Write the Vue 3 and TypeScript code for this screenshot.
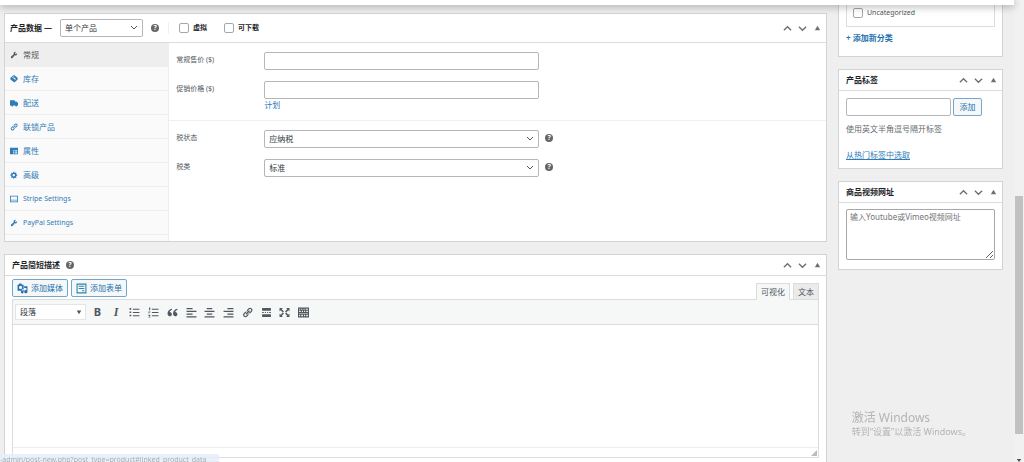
<script setup lang="ts">
import { ref } from 'vue'

interface Tab {
  id: string
  label: string
  icon: string
  latin?: boolean
}

const tabs: Tab[] = [
  { id: 'general', label: '常规', icon: 'wrench' },
  { id: 'inventory', label: '库存', icon: 'tag' },
  { id: 'shipping', label: '配送', icon: 'truck' },
  { id: 'linked', label: '联锁产品', icon: 'link' },
  { id: 'attributes', label: '属性', icon: 'table' },
  { id: 'advanced', label: '高级', icon: 'gear' },
  { id: 'stripe', label: 'Stripe Settings', icon: 'card', latin: true },
  { id: 'paypal', label: 'PayPal Settings', icon: 'wrench', latin: true },
]

const paths: Record<string, string> = {
  wrench:
    'M16.68 9.77c-1.34 1.34-3.3 1.67-4.95.99l-5.41 6.52c-.99.99-2.59.99-3.58 0s-.99-2.59 0-3.57l6.52-5.42c-.68-1.65-.35-3.61.99-4.95 1.28-1.28 3.12-1.62 4.72-1.06l-2.89 2.89 2.82 2.82 2.86-2.87c.53 1.58.18 3.39-1.08 4.65z',
  tag: 'M10 0l9 7v4l-8 8-10-8V7zM10 3L5 7l1 1 5-4zM8 8l5 4 2-2-5-4z',
  truck: 'M0 3h12v3h4l4 4v6h-2a2.500 2.500 0 0 1-5 0H8a2.500 2.500 0 0 1-5 0H0z',
  link: 'M17.74 2.76c1.68 1.69 1.68 4.41 0 6.1l-1.53 1.52c-1.12 1.12-2.7 1.47-4.14 1.09l2.62-2.61.76-.77.76-.76c.84-.84.84-2.2 0-3.04-.84-.85-2.2-.85-3.04 0l-.77.76-3.38 3.38c-.37-1.44-.02-3.02 1.1-4.14l1.52-1.53c1.69-1.68 4.42-1.68 6.1 0zM8.59 13.43l5.34-5.34c.42-.42.42-1.1 0-1.52-.44-.43-1.13-.39-1.53 0l-5.33 5.34c-.42.42-.42 1.1 0 1.52.44.43 1.13.39 1.52 0zm-.76 2.29l4.14-4.15c.38 1.44.03 3.02-1.09 4.14l-1.52 1.53c-1.69 1.68-4.41 1.68-6.1 0-1.68-1.68-1.68-4.42 0-6.1l1.53-1.52c1.12-1.12 2.7-1.47 4.14-1.1l-4.14 4.15c-.85.84-.85 2.2 0 3.05.84.84 2.2.84 3.04 0z',
  table: 'M0 2h20v16H0zM8 8v3h3V8zM13 8v3h5V8zM8 13v3h3v-3zM13 13v3h5v-3z',
  gear: 'M18 12h-2.18c-.17.7-.44 1.35-.81 1.93l1.54 1.54-2.1 2.1-1.54-1.54c-.58.36-1.23.63-1.91.79V19H8v-2.18c-.68-.16-1.33-.43-1.91-.79l-1.54 1.54-2.12-2.12 1.54-1.54c-.36-.58-.63-1.23-.79-1.91H1V9.03h2.17c.16-.7.44-1.35.8-1.94L2.43 5.55l2.1-2.1 1.54 1.54c.58-.37 1.24-.64 1.93-.81V2h3v2.18c.68.16 1.33.43 1.91.79l1.54-1.54 2.12 2.12-1.54 1.54c.36.59.64 1.24.8 1.94H18V12zm-8.5 1.5c1.66 0 3-1.34 3-3s-1.34-3-3-3-3 1.34-3 3 1.34 3 3 3z',
  card: 'M0 2h20v16H0zM2 4v12h16V4zM3 12h4v2H3zM8 12h4v2H8zM13 12h4v2h-4z',
  ul: 'M7 3h12v2H7zM7 9h12v2H7zM7 15h12v2H7zM1 2h3v3H1zM1 8h3v3H1zM1 14h3v3H1z',
  ol: 'M7 3h12v2H7zM7 9h12v2H7zM7 15h12v2H7zM2 1h2v5H2zM1 8h3v2H2v2H1zM1 14h3v5H1v-1h2v-1H1z',
  quote:
    'M9 3C4 4 1 7 1 12c0 3 2 5 4 5s4-2 4-4-2-4-4-4c0-2 2-3 4-4zM19 3c-5 1-8 4-8 9 0 3 2 5 4 5s4-2 4-4-2-4-4-4c0-2 2-3 4-4z',
  left: 'M1 2h11v2H1zM1 7h18v2H1zM1 12h11v2H1zM1 17h18v2H1z',
  center: 'M5 2h10v2H5zM1 7h18v2H1zM5 12h10v2H5zM1 17h18v2H1z',
  right: 'M8 2h11v2H8zM1 7h18v2H1zM8 12h11v2H8zM1 17h18v2H1z',
  more: 'M2 2h16v5H2zM2 9h3v2H2zM7 9h2v2H7zM11 9h2v2h-2zM15 9h3v2h-3zM2 13h16v5H2z',
  full: 'M1 2h6L5 4l4 4-2 2-4-4-2 2zM19 2v6l-2-2-4 4-2-2 4-4-2-2zM1 18v-6l2 2 4-4 2 2-4 4 2 2zM19 18h-6l2-2-4-4 2-2 4 4 2-2z',
  keyboard:
    'M0 1h20v18H0zM2 3v2h2V3zM6 3v2h2V3zM10 3v2h2V3zM14 3v2h4V3zM2 7v2h3V7zM7 7v2h2V7zM11 7v2h2V7zM15 7v2h3V7zM2 11v1h16v-1zM2 14v3h2v-3zM6 14v3h3v-3zM11 14v3h2v-3zM15 14v3h3v-3z',
  media:
    'M1 3h2l1-2h4l1 2h3v8H9v3H1zM6.500 5a3 3 0 1 0 0 6a3 3 0 1 0 0-6zM13 6h6v10a3 3 0 1 1-2-3V9h-4zM12 12v5a2.500 2.500 0 1 1-2-3v-2z',
  form: 'M1 1h18v18H1zM3 3v14h14V3zM5 5h10v2H5zM5 9h10v2H5zM11 13h4v2h-4z',
}

const tools = [
  { id: 'ul', label: '项目符号列表' },
  { id: 'ol', label: '编号列表' },
  { id: 'quote', label: '段落引用' },
  { id: 'left', label: '左对齐' },
  { id: 'center', label: '居中对齐' },
  { id: 'right', label: '右对齐' },
  { id: 'link', label: '插入链接' },
  { id: 'more', label: '插入More标签' },
  { id: 'full', label: '全屏' },
  { id: 'keyboard', label: '工具栏开关' },
]

const activeTab = ref('general')
const regularPrice = ref('')
const salePrice = ref('')
const tag = ref('')
const video = ref('')
const content = ref('')
</script>

<template>
  <div class="screen">
    <div class="page">
      <header class="topbar"></header>
      <div class="columns">
        <main class="main">
          <section class="panel data">
            <div class="head head-tall">
              <h2>产品数据 —</h2>
              <span class="select type">
                <select aria-label="产品类型"><option>单个产品</option></select>
                <svg viewBox="0 0 8 8"><path d="M1 2l3 3 3-3" /></svg>
              </span>
              <span class="help">?</span>
              <div class="flags">
                <label><input type="checkbox" />虚拟</label>
                <label><input type="checkbox" />可下载</label>
              </div>
              <div class="handles">
                <button aria-label="上移"><svg viewBox="0 0 10 10"><path d="M1 7l4-4 4 4" /></svg></button>
                <button aria-label="下移"><svg viewBox="0 0 10 10"><path d="M1 3l4 4 4-4" /></svg></button>
                <button aria-label="切换面板"><svg viewBox="0 0 10 10"><path class="solid" d="M5 2l3 5H2z" /></svg></button>
              </div>
            </div>
            <div class="data-body">
              <nav class="tabs">
                <a
                  v-for="t in tabs"
                  :key="t.id"
                  :href="'#' + t.id"
                  :class="{ active: t.id === activeTab, latin: t.latin }"
                  @click.prevent="activeTab = t.id"
                >
                  <svg class="icon" viewBox="0 0 20 20"><path :d="paths[t.icon]" /></svg>
                  <span>{{ t.label }}</span>
                </a>
              </nav>
              <div class="fields">
                <div class="group">
                  <div class="field">
                    <label for="regular">常规售价 ($)</label>
                    <input id="regular" v-model="regularPrice" class="box" type="text" />
                  </div>
                  <div class="field">
                    <label for="sale">促销价格 ($)</label>
                    <input id="sale" v-model="salePrice" class="box" type="text" />
                  </div>
                  <a class="schedule" href="#schedule">计划</a>
                </div>
                <div class="group">
                  <div class="field">
                    <label for="tax-status">税状态</label>
                    <span class="select box">
                      <select id="tax-status"><option>应纳税</option></select>
                      <svg viewBox="0 0 8 8"><path d="M1 2l3 3 3-3" /></svg>
                    </span>
                    <span class="help">?</span>
                  </div>
                  <div class="field">
                    <label for="tax-class">税类</label>
                    <span class="select box">
                      <select id="tax-class"><option>标准</option></select>
                      <svg viewBox="0 0 8 8"><path d="M1 2l3 3 3-3" /></svg>
                    </span>
                    <span class="help">?</span>
                  </div>
                </div>
              </div>
            </div>
          </section>

          <section class="panel description">
            <div class="head">
              <h2>产品简短描述</h2>
              <span class="help">?</span>
              <div class="handles">
                <button aria-label="上移"><svg viewBox="0 0 10 10"><path d="M1 7l4-4 4 4" /></svg></button>
                <button aria-label="下移"><svg viewBox="0 0 10 10"><path d="M1 3l4 4 4-4" /></svg></button>
                <button aria-label="切换面板"><svg viewBox="0 0 10 10"><path class="solid" d="M5 2l3 5H2z" /></svg></button>
              </div>
            </div>
            <div class="editor-wrap">
              <div class="editor-top">
                <button class="btn"><svg class="icon big" viewBox="0 0 20 20"><path :d="paths.media" /></svg>添加媒体</button>
                <button class="btn"><svg class="icon big teal" viewBox="0 0 20 20"><path :d="paths.form" /></svg>添加表单</button>
                <div class="modes">
                  <button class="mode on">可视化</button>
                  <button class="mode">文本</button>
                </div>
              </div>
              <div class="editor">
                <div class="toolbar">
                  <span class="select format">
                    <select aria-label="格式"><option>段落</option></select>
                    <svg viewBox="0 0 8 8"><path class="solid" d="M1 2h6l-3 5z" /></svg>
                  </span>
                  <div class="tools">
                    <button class="bold" aria-label="粗体">B</button>
                    <button class="italic" aria-label="斜体">I</button>
                    <button v-for="t in tools" :key="t.id" :aria-label="t.label">
                      <svg class="icon tool" viewBox="0 0 20 20"><path :d="paths[t.id]" /></svg>
                    </button>
                  </div>
                </div>
                <textarea v-model="content" class="content" aria-label="产品简短描述"></textarea>
                <div class="status"><svg viewBox="0 0 8 8"><path d="M8 0v8H0z" /></svg></div>
              </div>
            </div>
          </section>
        </main>

        <aside class="side">
          <section class="panel categories">
            <div class="cat-list">
              <label class="latin"><input type="checkbox" />Uncategorized</label>
            </div>
            <a class="add-cat" href="#add-category">+ 添加新分类</a>
          </section>

          <section class="panel">
            <div class="head">
              <h2>产品标签</h2>
              <div class="handles">
                <button aria-label="上移"><svg viewBox="0 0 10 10"><path d="M1 7l4-4 4 4" /></svg></button>
                <button aria-label="下移"><svg viewBox="0 0 10 10"><path d="M1 3l4 4 4-4" /></svg></button>
                <button aria-label="切换面板"><svg viewBox="0 0 10 10"><path class="solid" d="M5 2l3 5H2z" /></svg></button>
              </div>
            </div>
            <div class="side-body">
              <div class="tag-row">
                <input v-model="tag" class="box" type="text" aria-label="产品标签" />
                <button class="btn">添加</button>
              </div>
              <p>使用英文半角逗号隔开标签</p>
              <a class="popular" href="#popular">从热门标签中选取</a>
            </div>
          </section>

          <section class="panel">
            <div class="head">
              <h2>商品视频网址</h2>
              <div class="handles">
                <button aria-label="上移"><svg viewBox="0 0 10 10"><path d="M1 7l4-4 4 4" /></svg></button>
                <button aria-label="下移"><svg viewBox="0 0 10 10"><path d="M1 3l4 4 4-4" /></svg></button>
                <button aria-label="切换面板"><svg viewBox="0 0 10 10"><path class="solid" d="M5 2l3 5H2z" /></svg></button>
              </div>
            </div>
            <div class="video-body">
              <textarea v-model="video" class="video" aria-label="商品视频网址" placeholder="输入Youtube或Vimeo视频网址"></textarea>
            </div>
          </section>
        </aside>
      </div>
    </div>

    <div class="scrollbar">
      <div class="thumb"></div>
      <svg viewBox="0 0 8 4"><path d="M1 0h6l-3 4z" /></svg>
    </div>

    <div class="watermark">
      <strong>激活 Windows</strong>
      <span>转到“设置”以激活 Windows。</span>
    </div>
    <div class="url">-admin/post-new.php?post_type=product#linked_product_data</div>
  </div>
</template>

<style>
body {
  margin: 0;
  background: #efefef;
}
</style>

<style scoped>
* {
  box-sizing: border-box;
}
.screen {
  display: flex;
  height: 100vh;
  overflow: hidden;
  color: #50575e;
  font: 8px/12px 'Noto Sans', 'Noto Sans CJK SC', sans-serif;
}
button,
input,
select,
textarea {
  margin: 0;
  font: inherit;
  color: inherit;
}
button {
  padding: 0;
  border: 0;
  background: none;
}
a {
  color: #2f7bb8;
  text-decoration: none;
}
h2,
p {
  margin: 0;
}
.latin {
  font-size: 7px;
}
.page {
  flex: 1;
  min-width: 0;
  display: flex;
  flex-direction: column;
}
.topbar {
  position: relative;
  z-index: 2;
  flex: none;
  height: 5px;
  background: #fff;
  box-shadow: 0 1px 8px rgba(0, 0, 0, 0.4);
}
.columns {
  flex: 1;
  min-height: 0;
  display: flex;
  gap: 11px;
  padding: 0 11px 0 4px;
}
.main {
  flex: 1;
  min-width: 0;
  display: flex;
  flex-direction: column;
  gap: 12px;
  padding-top: 8px;
}
.side {
  flex: none;
  width: 165px;
  display: flex;
  flex-direction: column;
  gap: 12px;
}
.panel {
  background: #fff;
  border: 1px solid #d2d3d5;
}
.head {
  display: flex;
  align-items: center;
  height: 21px;
  padding: 0 1px 0 7px;
  border-bottom: 1px solid #dcdcde;
}
.head-tall {
  height: 29px;
  padding-left: 5px;
}
h2 {
  color: #1d2327;
  font-size: 8px;
  font-weight: 600;
  white-space: nowrap;
}
.handles {
  display: flex;
  margin-left: auto;
}
.handles button {
  display: flex;
  justify-content: center;
  width: 15px;
}
.handles svg {
  width: 9px;
  height: 9px;
  fill: none;
  stroke: #6c7075;
  stroke-width: 1.5;
}
.handles .solid {
  fill: #6c7075;
  stroke: none;
}
.help {
  flex: none;
  width: 8px;
  height: 8px;
  margin-left: 6px;
  border-radius: 50%;
  background: #666;
  color: #fff;
  font-size: 7px;
  font-weight: 700;
  line-height: 8px;
  text-align: center;
}
.box {
  height: 18px;
  border: 1px solid #b4b6b9;
  border-radius: 2px;
  background: #fff;
}
.select {
  position: relative;
  display: flex;
}
.select select {
  width: 100%;
  height: 100%;
  padding: 0 14px 0 4px;
  border: 0;
  border-radius: 2px;
  background: transparent;
  color: #32373c;
  appearance: none;
}
.select svg {
  position: absolute;
  top: 50%;
  right: 4px;
  width: 8px;
  height: 8px;
  margin-top: -4px;
  fill: none;
  stroke: #50575e;
  pointer-events: none;
}
.type {
  width: 83px;
  height: 18px;
  margin-left: 8px;
  border: 1px solid #b4b6b9;
  border-radius: 2px;
}
.head-tall .help {
  margin-left: 8px;
}
.flags {
  display: flex;
  gap: 17px;
  margin-left: 9px;
  padding-left: 10px;
  border-left: 1px solid #f0f0f0;
  color: #1d2327;
  font-size: 7px;
  font-weight: 600;
}
.flags label,
.cat-list label {
  display: flex;
  align-items: center;
  gap: 4px;
}
input[type='checkbox'] {
  width: 10px;
  height: 10px;
  border: 1px solid #a4a7ab;
  border-radius: 2px;
  background: #fff;
  appearance: none;
}
.data-body {
  display: flex;
  height: 198px;
}
.tabs {
  flex: none;
  width: 20%;
  border-right: 1px solid #eee;
  background: #fafafa;
}
.tabs a {
  display: flex;
  align-items: center;
  gap: 5px;
  height: 24px;
  padding-left: 5px;
  border-bottom: 1px solid #eee;
}
.tabs .active {
  background: #eee;
  color: #555;
}
.icon {
  flex: none;
  width: 8px;
  height: 8px;
  fill: currentColor;
  fill-rule: evenodd;
}
.fields {
  flex: 1;
  min-width: 0;
}
.group {
  display: flex;
  flex-direction: column;
  gap: 11px;
  padding: 9px 0 9px 7px;
}
.group + .group {
  border-top: 1px solid #f0f0f0;
}
.field {
  display: flex;
  align-items: center;
}
.field label {
  flex: none;
  width: 88px;
  padding-bottom: 2px;
  font-size: 7px;
}
.field .help {
  margin-bottom: 2px;
}
.field .box {
  width: 42.3%;
}
.schedule {
  align-self: flex-start;
  margin: -11px 0 0 88px;
}
.description {
  flex: 1;
  min-height: 0;
  display: flex;
  flex-direction: column;
  border-bottom: 0;
}
.description .head {
  flex: none;
}
.editor-wrap {
  flex: 1;
  display: flex;
  flex-direction: column;
  padding: 3px 7px 4px;
}
.editor-top {
  display: flex;
  align-items: flex-start;
  gap: 3px;
  height: 20px;
}
.btn {
  display: flex;
  align-items: center;
  justify-content: center;
  height: 18px;
  padding: 0 4px;
  border: 1px solid #72a7d1;
  border-radius: 2px;
  background: #f6f7f7;
  color: #2271b1;
  white-space: nowrap;
}
.big {
  width: 11px;
  height: 11px;
  margin-right: 3px;
}
.teal {
  color: #2a86ac;
}
.modes {
  display: flex;
  align-self: flex-end;
  gap: 3px;
  margin-left: auto;
}
.mode {
  height: 16px;
  padding: 0 4px;
  border: 1px solid #dcdcde;
  border-bottom: 0;
  background: #ebebeb;
}
.on {
  position: relative;
  z-index: 1;
  height: 17px;
  margin-bottom: -1px;
  background: #f6f7f7;
}
.editor {
  flex: 1;
  display: flex;
  flex-direction: column;
  border: 1px solid #dcdcde;
}
.toolbar {
  display: flex;
  align-items: center;
  height: 25px;
  padding-left: 2px;
  border-bottom: 1px solid #dcdcde;
  background: #f6f7f7;
}
.tools {
  display: grid;
  grid-template-columns: repeat(12, 1fr);
  width: 225px;
}
.tools button {
  display: flex;
  align-items: center;
  justify-content: center;
  height: 18px;
}
.format {
  width: 71px;
  height: 16px;
  margin-right: 2px;
  border: 1px solid #e4e5e6;
  background: #fff;
}
.format svg {
  right: 3px;
  width: 6px;
}
.format .solid {
  fill: #50575e;
  stroke: none;
}
.tools .bold {
  font-size: 11px;
  font-weight: 700;
}
.tools .italic {
  font: italic 700 12px/12px 'Liberation Serif', serif;
}
.tool {
  width: 11px;
  height: 11px;
}
.content {
  flex: 1;
  min-height: 0;
  padding: 6px;
  border: 0;
  resize: none;
  outline: 0;
}
.status {
  display: flex;
  justify-content: flex-end;
  align-items: flex-end;
  height: 10px;
  padding: 1px;
  border-top: 1px solid #eee;
}
.status svg {
  width: 6px;
  height: 6px;
  fill: #bbb;
}
.categories {
  height: 52px;
  padding: 0 7px;
  border-top: 0;
}
.cat-list {
  height: 22px;
  padding: 2px 6px;
  border: 1px solid #dcdcde;
  border-top: 0;
}
.add-cat {
  display: block;
  margin-top: 5px;
  color: #2271b1;
  font-weight: 600;
}
.side-body {
  padding: 7px 7px 7px;
}
.tag-row {
  display: flex;
  gap: 2px;
}
.tag-row .box {
  flex: 1;
  min-width: 0;
}
.tag-row .btn {
  width: 29px;
  margin-right: 13px;
}
.side-body p {
  margin: 7px 0 14px;
  color: #646970;
}
.popular {
  display: block;
  text-decoration: underline;
}
.video-body {
  padding: 6px 7px 9px;
}
.video {
  display: block;
  width: 100%;
  height: 51px;
  padding: 1px 3px;
  border: 1px solid #a4a7ab;
  border-radius: 2px;
  resize: vertical;
}
.video::placeholder {
  color: #757575;
}
.scrollbar {
  flex: none;
  display: grid;
  grid-template-rows: 196fr 238fr 25fr 3px;
  justify-items: center;
  width: 10px;
  background: #f1f1f1;
}
.thumb {
  grid-row: 2;
  width: 8px;
  background: #c1c1c1;
}
.scrollbar svg {
  grid-row: 4;
  width: 6px;
  height: 3px;
  fill: #505050;
}
.watermark {
  position: fixed;
  right: 53px;
  bottom: 24px;
  display: flex;
  flex-direction: column;
  color: #b4b4b4;
  font-size: 9px;
}
.watermark strong {
  font-size: 12px;
  font-weight: 400;
  line-height: 16px;
}
.url {
  position: fixed;
  bottom: -4px;
  left: 0;
  z-index: 3;
  padding-right: 12px;
  border-top-right-radius: 2px;
  background: rgba(228, 237, 249, 0.85);
  color: #a9adb3;
  font-size: 7px;
}
</style>
